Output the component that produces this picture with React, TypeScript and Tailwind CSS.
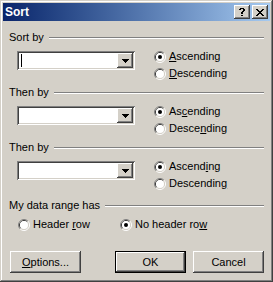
import React from 'react';

const raised =
  'shadow-[inset_-1px_-1px_0_#404040,inset_1px_1px_0_#ffffff,inset_-2px_-2px_0_#808080,inset_2px_2px_0_#d4d0c8]';
const sunken =
  'shadow-[inset_1px_1px_0_#808080,inset_-1px_-1px_0_#ffffff,inset_2px_2px_0_#404040,inset_-2px_-2px_0_#d4d0c8]';

const X_GLYPH = ['XX....XX', '.XX..XX.', '..XXXX..', '...XX...', '..XXXX..', '.XX..XX.', 'XX....XX'];
const HELP_GLYPH = ['.XXXX.', 'XX..XX', '....XX', '...XX.', '..XX..', '..XX..', '......', '..XX..'];
const ARROW_GLYPH = ['XXXXXXX', '.XXXXX.', '..XXX..', '...X...'];

function Pixels({ rows }: { rows: string[] }) {
  return (
    <svg width={rows[0].length} height={rows.length} shapeRendering="crispEdges">
      {rows.flatMap((r, y) =>
        r.split('').map((c, x) =>
          c === 'X' ? <rect key={`${x}-${y}`} x={x} y={y} width={1} height={1} fill="#000" /> : null
        )
      )}
    </svg>
  );
}

function RadioDot({ checked }: { checked?: boolean }) {
  return (
    <svg width={12} height={12} className="shrink-0">
      <path d="M2.11 9.89 A5.5 5.5 0 0 1 9.89 2.11" fill="none" stroke="#808080" />
      <path d="M9.89 2.11 A5.5 5.5 0 0 1 2.11 9.89" fill="none" stroke="#ffffff" />
      <path d="M2.82 9.18 A4.5 4.5 0 0 1 9.18 2.82" fill="none" stroke="#404040" />
      <path d="M9.18 2.82 A4.5 4.5 0 0 1 2.82 9.18" fill="none" stroke="#d4d0c8" />
      <circle cx={6} cy={6} r={4} fill="#ffffff" />
      {checked && <circle cx={6} cy={6} r={2} fill="#000" />}
    </svg>
  );
}

function Radio({ label, hot, checked }: { label: string; hot: number; checked?: boolean }) {
  return (
    <div className="flex h-[17px] items-center gap-[3px]">
      <RadioDot checked={checked} />
      <span>
        {label.slice(0, hot)}
        <span className="underline decoration-1 underline-offset-[1px]">{label[hot]}</span>
        {label.slice(hot + 1)}
      </span>
    </div>
  );
}

function GroupHeader({ title }: { title: string }) {
  return (
    <div className="flex h-[13px] items-center">
      <span className="whitespace-nowrap">{title}</span>
      <div className="ml-[5px] mt-[1px] h-[2px] flex-1 border-t border-b border-t-[#808080] border-b-white" />
    </div>
  );
}

function Combo({ caret }: { caret?: boolean }) {
  return (
    <div className={`mt-[3px] flex h-[19px] w-[118px] items-stretch bg-white p-[2px] ${sunken}`}>
      <div className="flex flex-1 items-center pl-[2px]">
        {caret && <div className="h-[13px] w-[1px] bg-black" />}
      </div>
      <div className={`flex w-[16px] items-center justify-center bg-[#d4d0c8] ${raised}`}>
        <Pixels rows={ARROW_GLYPH} />
      </div>
    </div>
  );
}

function SortSection({ title, asc, desc, caret, className = '' }: { title: string; asc: number; desc: number; caret?: boolean; className?: string }) {
  return (
    <div className={className}>
      <GroupHeader title={title} />
      <div className="mt-[4px] flex pl-[8px]">
        <div className="self-start">
          <Combo caret={caret} />
        </div>
        <div className="ml-[19px] flex flex-col">
          <Radio label="Ascending" hot={asc} checked />
          <Radio label="Descending" hot={desc} />
        </div>
      </div>
    </div>
  );
}

function Button({ children, isDefault }: { children: React.ReactNode; isDefault?: boolean }) {
  return (
    <div
      className={`flex h-[22px] w-[71px] items-center justify-center bg-[#d4d0c8] ${
        isDefault
          ? 'border border-black shadow-[inset_-1px_-1px_0_#404040,inset_1px_1px_0_#ffffff,inset_-2px_-2px_0_#808080]'
          : raised
      }`}
    >
      {children}
    </div>
  );
}

export default function App() {
  return (
    <div
      className="flex h-[282px] w-[273px] flex-col bg-[#d4d0c8] p-[3px] text-[11px] leading-[13px] text-black shadow-[inset_-1px_-1px_0_#404040,inset_1px_1px_0_#d4d0c8,inset_-2px_-2px_0_#808080,inset_2px_2px_0_#ffffff]"
      style={{ fontFamily: '"Liberation Sans", Arial, sans-serif' }}
    >
      {/* Title bar */}
      <div className="flex h-[18px] items-center justify-between bg-gradient-to-r from-[#0a246a] to-[#a6caf0] pl-[2px] pr-[2px]">
        <span className="text-[12px] font-bold text-white">Sort</span>
        <div className="flex gap-[2px]">
          <div className={`flex h-[14px] w-[16px] items-center justify-center bg-[#d4d0c8] ${raised}`}>
            <Pixels rows={HELP_GLYPH} />
          </div>
          <div className={`flex h-[14px] w-[16px] items-center justify-center bg-[#d4d0c8] ${raised}`}>
            <Pixels rows={X_GLYPH} />
          </div>
        </div>
      </div>

      {/* Body */}
      <div className="flex flex-col px-[6px]">
        <SortSection title="Sort by" asc={0} desc={0} caret className="mt-[10px]" />
        <SortSection title="Then by" asc={2} desc={5} className="mt-[4px]" />
        <SortSection title="Then by" asc={6} desc={9} className="mt-[4px]" />

        <div className="mt-[7px]">
          <GroupHeader title="My data range has" />
          <div className="mt-[4px] flex pl-[9px]">
            <div className="w-[102px]">
              <Radio label="Header row" hot={7} />
            </div>
            <Radio label="No header row" hot={12} checked />
          </div>
        </div>

        <div className="mt-[18px] flex pl-[1px]">
          <Button>
            <span>
              <span className="underline decoration-1 underline-offset-[1px]">O</span>ptions...
            </span>
          </Button>
          <div className="ml-[34px]">
            <Button isDefault>OK</Button>
          </div>
          <div className="ml-[7px]">
            <Button>Cancel</Button>
          </div>
        </div>
      </div>
    </div>
  );
}
